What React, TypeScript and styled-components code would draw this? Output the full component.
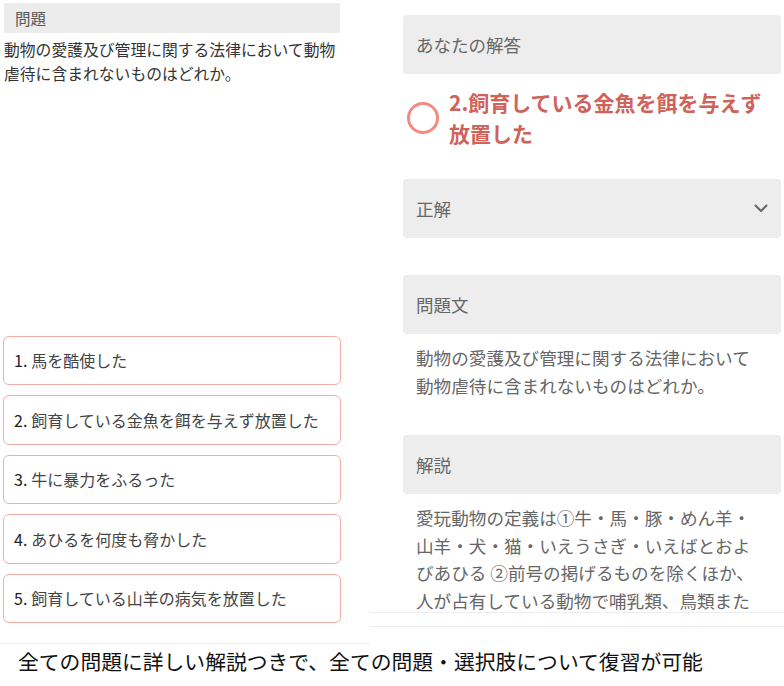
import React from 'react';
import styled, { createGlobalStyle } from 'styled-components';

const GlobalStyle = createGlobalStyle`
  body {
    margin: 0;
    background: #ffffff;
    font-family: "Noto Sans CJK JP", "Noto Sans", sans-serif;
  }
`;

const Page = styled.div`
  width: 784px;
  height: 686px;
  overflow: hidden;
  background: #fff;
`;

const Shots = styled.div`
  display: flex;
  align-items: flex-start;
`;

const LeftShot = styled.div`
  width: 370px;
  height: 644px;
  box-sizing: border-box;
  border-bottom: 1px solid #efefef;
  display: flex;
  flex-direction: column;
  padding: 3px 0 0 3px;
`;

const SectionBar = styled.div`
  width: 336px;
  height: 30px;
  margin-left: 1px;
  background: #ececec;
  color: #555;
  font-size: 15.5px;
  line-height: 30px;
  padding-left: 11px;
  box-sizing: border-box;
`;

const QuestionText = styled.p`
  margin: 5px 0 0 1px;
  width: 340px;
  font-size: 15.8px;
  line-height: 24px;
  color: #333;
`;

const Options = styled.div`
  margin-top: auto;
  margin-bottom: 20px;
  display: flex;
  flex-direction: column;
  gap: 10px;
`;

const Option = styled.div`
  width: 338px;
  height: 49.5px;
  box-sizing: border-box;
  border: 1.5px solid #f4aca6;
  border-radius: 6px;
  padding-left: 10px;
  display: flex;
  align-items: center;
  font-size: 16px;
  color: #444;
`;

const OptionNo = styled.span`
  color: #222;
  margin-right: 4px;
`;

const RightShot = styled.div`
  flex: 1;
  display: flex;
  flex-direction: column;
`;

const Scroll = styled.div`
  height: 613px;
  overflow: hidden;
  box-sizing: border-box;
  border-bottom: 1px solid #eeeeee;
  padding: 15px 3px 0 33px;
`;

const FooterStrip = styled.div`
  height: 13px;
  border-bottom: 1px solid #ececec;
`;

const Box = styled.div<{ $gap?: number }>`
  height: 59px;
  margin-top: ${({ $gap }) => $gap ?? 0}px;
  background: #ededed;
  border-radius: 4px;
  padding: 0 13px;
  display: flex;
  align-items: center;
  justify-content: space-between;
  font-size: 17.5px;
  color: #666;
`;

const AnswerRow = styled.div`
  display: flex;
  align-items: center;
  margin-top: 13px;
  padding-left: 4px;
  gap: 10px;
`;

const Ring = styled.div`
  width: 26px;
  height: 26px;
  border: 3px solid #f38a80;
  border-radius: 50%;
  flex-shrink: 0;
`;

const AnswerText = styled.div`
  font-size: 21px;
  line-height: 31px;
  font-weight: 700;
  color: #cf625b;
  width: 320px;
`;

const BodyText = styled.p`
  margin: 10px 0 0 13px;
  font-size: 17.6px;
  line-height: 27.5px;
  color: #666;
`;

const Caption = styled.div`
  padding: 2px 0 0 18px;
  font-size: 20.8px;
  line-height: 30px;
  color: #111;
  white-space: nowrap;
`;

const Chevron = () => (
  <svg width="14" height="9" viewBox="0 0 14 9">
    <polyline points="1.5,1.5 7,7 12.5,1.5" fill="none" stroke="#666" strokeWidth="2" strokeLinecap="round" strokeLinejoin="round" />
  </svg>
);

const choices = [
  '馬を酷使した',
  '飼育している金魚を餌を与えず放置した',
  '牛に暴力をふるった',
  'あひるを何度も脅かした',
  '飼育している山羊の病気を放置した',
];

const App: React.FC = () => (
  <Page>
    <GlobalStyle />
    <Shots>
      <LeftShot>
        <SectionBar>問題</SectionBar>
        <QuestionText>
          動物の愛護及び管理に関する法律において動物
          <br />
          虐待に含まれないものはどれか。
        </QuestionText>
        <Options>
          {choices.map((c, i) => (
            <Option key={i}>
              <OptionNo>{i + 1}.</OptionNo>
              {c}
            </Option>
          ))}
        </Options>
      </LeftShot>
      <RightShot>
        <Scroll>
          <Box>あなたの解答</Box>
          <AnswerRow>
            <Ring />
            <AnswerText>2.飼育している金魚を餌を与えず放置した</AnswerText>
          </AnswerRow>
          <Box $gap={30}>
            正解
            <Chevron />
          </Box>
          <Box $gap={37}>問題文</Box>
          <BodyText>
            動物の愛護及び管理に関する法律において
            <br />
            動物虐待に含まれないものはどれか。
          </BodyText>
          <Box $gap={36}>解説</Box>
          <BodyText>
            愛玩動物の定義は①牛・馬・豚・めん羊・
            <br />
            山羊・犬・猫・いえうさぎ・いえばとおよ
            <br />
            びあひる ②前号の掲げるものを除くほか、
            <br />
            人が占有している動物で哺乳類、鳥類また
          </BodyText>
        </Scroll>
        <FooterStrip />
      </RightShot>
    </Shots>
    <Caption>全ての問題に詳しい解説つきで、全ての問題・選択肢について復習が可能</Caption>
  </Page>
);

export default App;
